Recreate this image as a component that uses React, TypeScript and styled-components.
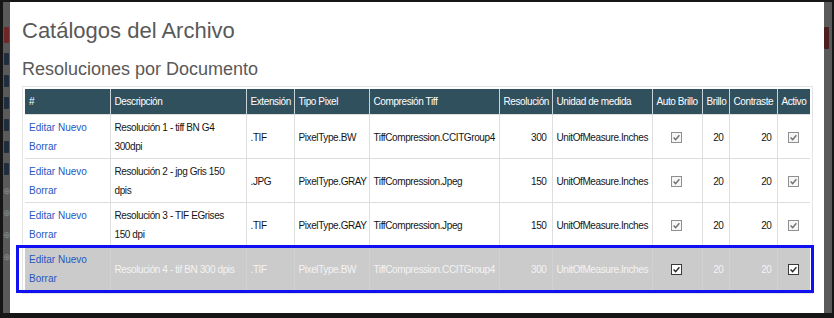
import React from "react";
import styled, { createGlobalStyle } from "styled-components";

const GlobalStyle = createGlobalStyle`
  html, body {
    margin: 0;
    padding: 0;
    background: #161616;
    font-family: "Liberation Sans", Arial, sans-serif;
  }
`;

const Screen = styled.div`
  box-sizing: border-box;
  width: 834px;
  height: 318px;
  padding: 2px 2px 5px 3px;
  display: flex;
`;

const Backdrop = styled.div`
  flex: 1;
  display: flex;
  background: #5a5a5a;
`;

const LeftStrip = styled.div`
  width: 7px;
  display: flex;
  flex-direction: column;
  align-items: center;
  gap: 10px;
  padding-top: 25px;
`;

const StripBlock = styled.div<{ $color: string; $h: number }>`
  width: 5px;
  height: ${(p) => p.$h}px;
  background: ${(p) => p.$color};
  border-radius: 1px;
`;

const StripGlyph = styled.div`
  font-size: 9px;
  line-height: 12px;
  color: #888;
`;

const RightStrip = styled.div`
  width: 8px;
  display: flex;
  flex-direction: column;
  padding-top: 25px;
`;

const Modal = styled.div`
  flex: 1;
  background: #fff;
  padding: 16px 11px 0 12px;
`;

const Title = styled.h1`
  margin: 0;
  font-size: 22px;
  line-height: 25px;
  font-weight: normal;
  color: #595959;
`;

const Subtitle = styled.h2`
  margin: 16px 0 6px;
  font-size: 18px;
  line-height: 21px;
  font-weight: normal;
  color: #595959;
`;

const TableFrame = styled.div`
  border: 1px solid #e4e4e4;
  padding: 2px;
`;

const Grid = styled.table`
  width: 100%;
  table-layout: fixed;
  border-collapse: collapse;
  font-size: 10px;
  letter-spacing: -0.4px;
  color: #151515;
`;

const HeadCell = styled.th`
  height: 25px;
  padding: 0 4px;
  background: #31505e;
  color: #fff;
  font-weight: normal;
  text-align: left;
  white-space: nowrap;
  border-right: 1px solid #c9d3d8;
  &:last-child {
    border-right: none;
  }
`;

const Row = styled.tr<{ $selected?: boolean }>`
  position: relative;
  & > td {
    background: ${(p) => (p.$selected ? "#cbcbcb" : "#fff")};
    color: ${(p) => (p.$selected ? "#f3f3f3" : "#151515")};
    border-color: ${(p) => (p.$selected ? "#d2d2d2" : "#dedede")};
  }
  ${(p) =>
    p.$selected &&
    `
    &::after {
      content: "";
      position: absolute;
      left: -9px;
      right: -4px;
      top: -2px;
      bottom: -2px;
      border: 3px solid #1010f0;
      pointer-events: none;
    }
  `}
`;

const Cell = styled.td<{ $align?: "left" | "right" | "center" }>`
  padding: 3px 5px 2px 4px;
  line-height: 19px;
  vertical-align: middle;
  text-align: ${(p) => p.$align || "left"};
  border: 1px solid #dedede;
  white-space: nowrap;
  &:first-child {
    border-left: none;
  }
  &:last-child {
    border-right: none;
  }
`;

const Line = styled.div`
  white-space: nowrap;
`;

const LinkLine = styled.div`
  letter-spacing: 0;
  white-space: nowrap;
`;

const Action = styled.a`
  color: #2557c2;
  text-decoration: none;
  cursor: pointer;
`;

const Box = styled.span<{ $strong?: boolean }>`
  display: inline-flex;
  align-items: center;
  justify-content: center;
  box-sizing: border-box;
  width: 11px;
  height: 11px;
  vertical-align: middle;
  border: 1px solid ${(p) => (p.$strong ? "#3a3a3a" : "#8f8f8f")};
  background: ${(p) => (p.$strong ? "#fff" : "#f6f6f6")};
`;

function Check({ strong }: { strong?: boolean }) {
  return (
    <Box $strong={strong}>
      <svg width="9" height="9" viewBox="0 0 9 9">
        <path
          d="M1.6 4.6 L3.6 6.6 L7.4 2.2"
          fill="none"
          stroke={strong ? "#2a2a2a" : "#707070"}
          strokeWidth="1.4"
        />
      </svg>
    </Box>
  );
}

interface Resolucion {
  desc: string[];
  ext: string;
  pixel: string;
  comp: string;
  res: number;
  unit: string;
  autoBrillo: boolean;
  brillo: number;
  contraste: number;
  activo: boolean;
  selected?: boolean;
}

const rows: Resolucion[] = [
  {
    desc: ["Resolución 1 - tiff BN G4", "300dpi"],
    ext: ".TIF",
    pixel: "PixelType.BW",
    comp: "TiffCompression.CCITGroup4",
    res: 300,
    unit: "UnitOfMeasure.Inches",
    autoBrillo: true,
    brillo: 20,
    contraste: 20,
    activo: true,
  },
  {
    desc: ["Resolución 2 - jpg Gris 150", "dpis"],
    ext: ".JPG",
    pixel: "PixelType.GRAY",
    comp: "TiffCompression.Jpeg",
    res: 150,
    unit: "UnitOfMeasure.Inches",
    autoBrillo: true,
    brillo: 20,
    contraste: 20,
    activo: true,
  },
  {
    desc: ["Resolución 3 - TIF EGrises", "150 dpi"],
    ext: ".TIF",
    pixel: "PixelType.GRAY",
    comp: "TiffCompression.Jpeg",
    res: 150,
    unit: "UnitOfMeasure.Inches",
    autoBrillo: true,
    brillo: 20,
    contraste: 20,
    activo: true,
  },
  {
    desc: ["Resolución 4 - tif BN 300 dpis"],
    ext: ".TIF",
    pixel: "PixelType.BW",
    comp: "TiffCompression.CCITGroup4",
    res: 300,
    unit: "UnitOfMeasure.Inches",
    autoBrillo: true,
    brillo: 20,
    contraste: 20,
    activo: true,
    selected: true,
  },
];

const columns = [
  { title: "#", width: 85 },
  { title: "Descripción", width: 136 },
  { title: "Extensión", width: 48 },
  { title: "Tipo Pixel", width: 75 },
  { title: "Compresión Tiff", width: 130 },
  { title: "Resolución", width: 53 },
  { title: "Unidad de medida", width: 100 },
  { title: "Auto Brillo", width: 50 },
  { title: "Brillo", width: 27 },
  { title: "Contraste", width: 48 },
  { title: "Activo", width: 33 },
];

function App() {
  return (
    <>
      <GlobalStyle />
      <Screen>
        <Backdrop>
          <LeftStrip>
            <StripBlock $color="#6e2626" $h={16} />
            <StripBlock $color="#1f2d3f" $h={12} />
            <StripBlock $color="#1f2d3f" $h={12} />
            <StripBlock $color="#1f2d3f" $h={12} />
            <StripBlock $color="#1f2d3f" $h={12} />
            <StripBlock $color="#1f2d3f" $h={12} />
            <StripBlock $color="#1f2d3f" $h={12} />
            <StripGlyph>⊕</StripGlyph>
            <StripGlyph>⊕</StripGlyph>
            <StripGlyph>⊕</StripGlyph>
            <StripGlyph>⊕</StripGlyph>
          </LeftStrip>
          <Modal>
            <Title>Catálogos del Archivo</Title>
            <Subtitle>Resoluciones por Documento</Subtitle>
            <TableFrame>
              <Grid>
                <colgroup>
                  {columns.map((c) => (
                    <col key={c.title} style={{ width: c.width }} />
                  ))}
                </colgroup>
                <thead>
                  <tr>
                    {columns.map((c) => (
                      <HeadCell key={c.title}>{c.title}</HeadCell>
                    ))}
                  </tr>
                </thead>
                <tbody>
                  {rows.map((r, i) => (
                    <Row key={i} $selected={r.selected}>
                      <Cell>
                        <LinkLine>
                          <Action>Editar</Action> <Action>Nuevo</Action>
                        </LinkLine>
                        <LinkLine>
                          <Action>Borrar</Action>
                        </LinkLine>
                      </Cell>
                      <Cell>
                        {r.desc.map((d) => (
                          <Line key={d}>{d}</Line>
                        ))}
                      </Cell>
                      <Cell>{r.ext}</Cell>
                      <Cell>{r.pixel}</Cell>
                      <Cell>{r.comp}</Cell>
                      <Cell $align="right">{r.res}</Cell>
                      <Cell>{r.unit}</Cell>
                      <Cell $align="center">
                        {r.autoBrillo && <Check strong={r.selected} />}
                      </Cell>
                      <Cell $align="right">{r.brillo}</Cell>
                      <Cell $align="right">{r.contraste}</Cell>
                      <Cell $align="center">
                        {r.activo && <Check strong={r.selected} />}
                      </Cell>
                    </Row>
                  ))}
                </tbody>
              </Grid>
            </TableFrame>
          </Modal>
          <RightStrip>
            <StripBlock $color="#4a1f1f" $h={22} />
          </RightStrip>
        </Backdrop>
      </Screen>
    </>
  );
}

export default App;
